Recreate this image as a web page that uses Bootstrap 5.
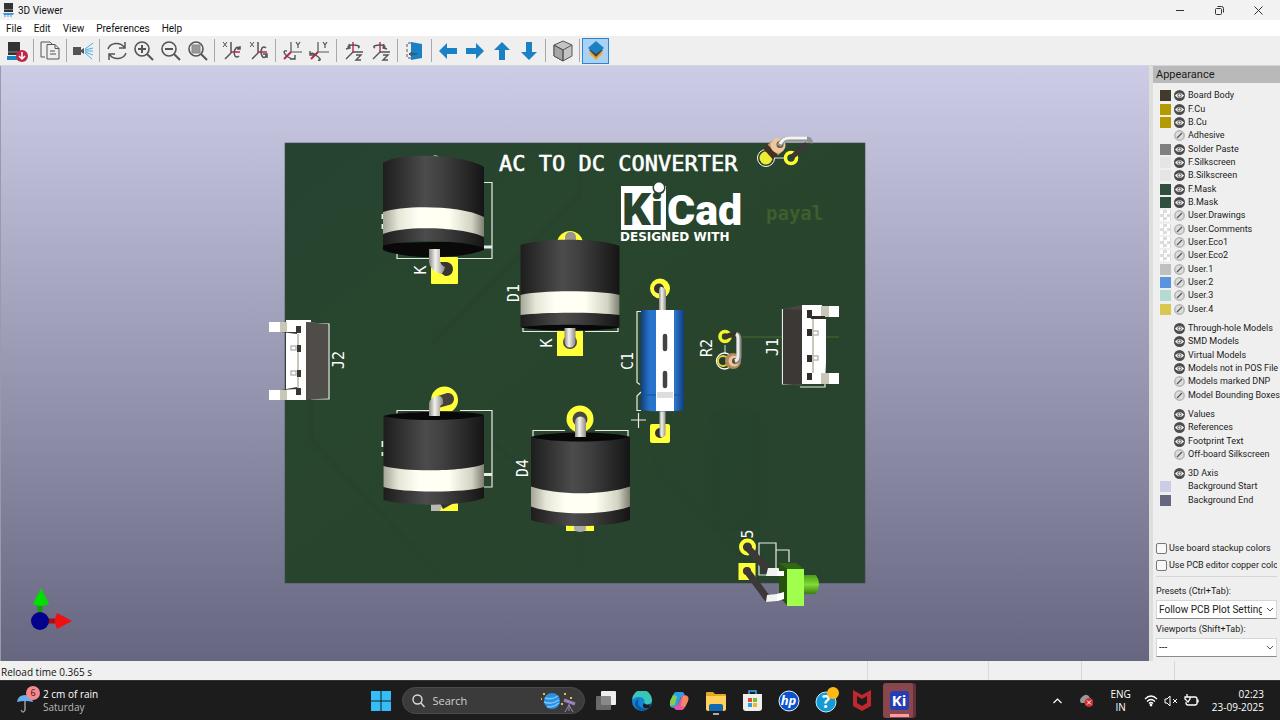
<!DOCTYPE html>
<html lang="en">
<head>
<meta charset="utf-8">
<meta name="viewport" content="width=device-width, initial-scale=1">
<title>3D Viewer</title>
<link rel="stylesheet" href="https://cdn.jsdelivr.net/npm/bootstrap@5.3.0/dist/css/bootstrap.min.css">
<style>
body{font-family:"Open Sans","Noto Sans",sans-serif;font-size:10px;line-height:13px;color:#111;background:#efefef}
button{font:inherit;color:inherit;background:none;border:0;padding:0}
svg{display:block;flex:none}
.titlebar{height:20px;background:#f2f2f2;padding:0 2px 0 3px}
.titlebar,.menus,.side{font-family:Roboto,"Open Sans",sans-serif}
.winctl{width:39px;height:20px;display:grid;place-items:center}
.menus{height:16px;background:#fff;padding-left:6px;gap:12px}
.tools{height:30px;background:#efefef;padding-left:3px;border-bottom:1px solid #d5d5dc}
.tool{width:27px;height:26px;display:grid;place-items:center}
.tool.on{background:#abd2f2;border:1px solid #2b84cf}
.rule{width:1px;height:23px;background:#a9a9a9;margin:0 3px}
.rule.tight{margin-right:2px}
.scene{background:linear-gradient(#cccce6,#666680);border-left:1px solid #9a9aa8;min-height:0}
.side{width:131px;background:#efefef;border-left:4px solid #dedede;color:#1b1b1b}
.side h2{font-size:11px;font-weight:400;line-height:17px;background:#b9b9b9;padding-left:3px;margin:0 0 6px}
.layers{display:grid;grid-auto-rows:1fr;margin:0 0 6px;padding:0 0 0 7px;list-style:none;font-size:9px;white-space:nowrap;overflow:hidden}
.layers li{display:flex;align-items:center;min-height:0}
.sw{width:11px;height:11px;margin-right:3px}
.eye{width:11px;height:11px;margin-right:3px}
.check{background:repeating-conic-gradient(#dcdcdc 0 25%,#fff 0 50%) 0 0/7px 7px}
.l17{height:227px}.l6{height:80px}.l4{height:53px}.l3{height:40px}
.opts{padding:0 3px 4px 3px;font-size:9px;white-space:nowrap}
.opts input{appearance:none;width:11px;height:11px;border:1px solid #777;border-radius:2px;margin:0 2px 0 0;background:#f8f8f8;flex:none}
.opt{height:17px;display:flex;align-items:center;overflow:hidden}
.opts hr{margin:2px 0 8px;border-color:#888}
.pick{position:relative;margin-top:2px}
.pick select{appearance:none;width:100%;height:19px;border:1px solid #d0d8d8;border-bottom-color:#8b8b8b;background:#fff;font-size:10px;padding:0 14px 0 2px;color:#222;display:block;overflow:hidden}
.pick svg{position:absolute;right:3px;top:7px;pointer-events:none}
.status{height:19px;background:#f0f0f0;padding-left:1px}
.status span{border-left:1px solid #d9d9d9;height:100%}
.w121{width:121px}.w93{width:93px}.w106{width:106px}
.taskbar{height:40px;background:#1c1c1c;color:#fff;border-top:1px solid #333}
.wing{flex:1 1 0;min-width:0}
.startbtn{width:37px;height:36px;display:grid;place-items:center}
.find{width:183px;height:27px;border-radius:14px;background:#3b3b3b;border:1px solid #4a4a4a;padding:0 3px 0 9px;margin:0 3px 0 2px}
.find input{background:none;border:0;outline:0;color:#ddd;font-size:11px;width:60px;flex:1;padding:0 0 0 8px}
.find input::placeholder{color:#d0d0d0;opacity:1}
.apps{display:grid;grid-template-columns:repeat(9,1fr);width:330px;height:39px}
.apps button{display:grid;place-items:center}
.tray{gap:13px}
.tray-set{gap:6px}
.silk{font-family:"DejaVu Sans Mono",monospace;fill:#fff}
</style>
</head>
<body class="vh-100 d-flex flex-column overflow-hidden">

<header>
 <div class="titlebar d-flex align-items-center">
  <svg width="11" height="14" viewBox="0 0 11 14"><path d="M1 0h9v9H1z" fill="#333"/><path d="M1 6h9v1H1z" fill="#777"/><path d="M0 10h11l-1 2H1z" fill="#3d9bd4"/><path d="M2 12v2M5 12v2M8 12v2" stroke="#3d9bd4"/></svg>
  <span class="ms-1">3D Viewer</span>
  <div class="ms-auto d-flex">
   <button class="winctl" aria-label="Minimize"><svg width="9" height="9"><path d="M0 4.500h8" stroke="#333"/></svg></button>
   <button class="winctl" aria-label="Restore"><svg width="9" height="9" fill="none" stroke="#333"><rect x=".5" y="2.500" width="6" height="6" rx="1"/><path d="M2.500 .5h4q2 0 2 2v4"/></svg></button>
   <button class="winctl" aria-label="Close"><svg width="9" height="9"><path d="M.5.5l8 8M8.500.5l-8 8" stroke="#333"/></svg></button>
  </div>
 </div>
 <nav class="menus d-flex align-items-center" aria-label="Menu">
  <button>File</button><button>Edit</button><button>View</button><button>Preferences</button><button>Help</button>
 </nav>
 <div class="tools d-flex align-items-center" role="toolbar" aria-label="View tools">
  <button class="tool" aria-label="Reload board"><svg width="22" height="22" viewBox="0 0 22 22"><path d="M2 2h12v13H2z" fill="#333"/><path d="M2 12h12" stroke="#888"/><path d="M1 16h13v4H1z" fill="#1a81c4"/><circle cx="16" cy="16" r="6" fill="#bf2641"/><path d="M16 12v6M13 16l3 3 3-3" stroke="#fff" stroke-width="1.500" fill="none"/></svg></button>
  <i class="rule tight"></i>
  <button class="tool" aria-label="Copy"><svg width="22" height="22" viewBox="0 0 22 22" fill="#efefef" stroke="#545454"><path d="M6 17H2V2h9l3 3"/><path d="M8 4.500h8l4 4V19H8z"/><path d="M16 4.500v4h4M11 11h5M11 14h6" fill="none"/></svg></button>
  <i class="rule tight"></i>
  <button class="tool" aria-label="Raytracing"><svg width="22" height="22" viewBox="0 0 22 22"><path d="M1 7h8v8H1zM9 10l3-2v6l-3-2z" fill="#545454"/><path d="M13 9l8-6M13 10l8-2M13 11h8M13 12l8 3M13 13l7 6" stroke="#4aaee6" fill="none"/></svg></button>
  <i class="rule"></i>
  <button class="tool" aria-label="Redraw"><svg width="22" height="22" viewBox="0 0 22 22" fill="none" stroke="#545454" stroke-width="1.500"><path d="M2 9a9 8 0 0 1 16-2M20 13a9 8 0 0 1-16 2M19 2v6h-6M3 20v-6h6"/></svg></button>
  <button class="tool" aria-label="Zoom in"><svg width="22" height="22" viewBox="0 0 22 22" fill="none" stroke="#545454" stroke-width="1.600"><circle cx="9" cy="9" r="7"/><path d="M14 14l6 6" stroke-width="2"/><path d="M5 9h8M9 5v8" stroke-width="2"/></svg></button>
  <button class="tool" aria-label="Zoom out"><svg width="22" height="22" viewBox="0 0 22 22" fill="none" stroke="#545454" stroke-width="1.600"><circle cx="9" cy="9" r="7"/><path d="M14 14l6 6" stroke-width="2"/><path d="M5 9h8" stroke-width="2"/></svg></button>
  <button class="tool" aria-label="Zoom to fit"><svg width="22" height="22" viewBox="0 0 22 22" fill="none" stroke="#545454" stroke-width="1.600"><circle cx="9" cy="9" r="7"/><path d="M14 14l6 6" stroke-width="2"/><path d="M5 5h8v8H5z" fill="#999" stroke="#888" stroke-width="1"/></svg></button>
  <i class="rule"></i>
  <button class="tool" aria-label="Rotate X clockwise"><svg width="22" height="22" viewBox="0 0 22 22" fill="none" stroke="#545454" stroke-width="1.500"><path d="M2 2l4 5M6 2L2 7" stroke-width="1"/><path d="M10 2v11l-6 6"/><path d="M10 12h9" stroke="#bf2641"/><path d="M19 9q-2-3-4-1-3 4-1 8 2 2 4 0M16 9h3V6"/></svg></button>
  <button class="tool" aria-label="Rotate X counterclockwise"><svg width="22" height="22" viewBox="0 0 22 22" fill="none" stroke="#545454" stroke-width="1.500"><path d="M2 2l4 5M6 2L2 7" stroke-width="1"/><path d="M10 2v11l-6 6"/><path d="M10 12h9" stroke="#bf2641"/><path d="M18 8q-2-2-4 0-2 4 0 8 2 3 4 0v-2M15 14h4v4"/></svg></button>
  <i class="rule"></i>
  <button class="tool" aria-label="Rotate Y clockwise"><svg width="22" height="22" viewBox="0 0 22 22" fill="none" stroke="#545454" stroke-width="1.400"><path d="M9 2v10h11M14 2l2 3 2-3M16 5v3" stroke-width="1.200"/><path d="M9 12l-7 7" stroke="#bf2641" stroke-width="2"/><path d="M5 11c-5-1-3 3 1 6 3 2 6 3 6 1M8 19h5v-4"/></svg></button>
  <button class="tool" aria-label="Rotate Y counterclockwise"><svg width="22" height="22" viewBox="0 0 22 22" fill="none" stroke="#545454" stroke-width="1.400"><path d="M9 2v10h11M14 2l2 3 2-3M16 5v3" stroke-width="1.200"/><path d="M9 12l-7 7" stroke="#bf2641" stroke-width="2"/><path d="M2 15c-1-3 3-2 6 1 3 2 5 5 1 4M1 11v4h4"/></svg></button>
  <i class="rule"></i>
  <button class="tool" aria-label="Rotate Z clockwise"><svg width="22" height="22" viewBox="0 0 22 22" fill="none" stroke="#545454" stroke-width="1.400"><path d="M10 12h10M10 12l-7 7M13 15h5l-5 5h5"/><path d="M10 2v10" stroke="#bf2641"/><path d="M15 8c4-2-2-3-5-3s-8 2-3 3M6 4l1 4-4 1"/></svg></button>
  <button class="tool" aria-label="Rotate Z counterclockwise"><svg width="22" height="22" viewBox="0 0 22 22" fill="none" stroke="#545454" stroke-width="1.400"><path d="M10 12h10M10 12l-7 7M13 15h5l-5 5h5"/><path d="M10 2v10" stroke="#bf2641"/><path d="M5 8c-4-2 2-3 5-3s8 2 3 3M14 4l-1 4 4 1"/></svg></button>
  <i class="rule"></i>
  <button class="tool" aria-label="Flip board"><svg width="22" height="22" viewBox="0 0 22 22"><path d="M7 2l11 2v14L7 20z" fill="#1a81c4"/><path d="M7 3H3v15h4" stroke="#545454" stroke-dasharray="3 2" fill="none"/><path d="M5 14h8M8 12l-3 2 3 2" stroke="#345" fill="none"/></svg></button>
  <i class="rule tight"></i>
  <button class="tool" aria-label="Move left"><svg width="20" height="20" viewBox="0 0 20 20"><path id="arr" d="M1 10l8-8v5h10v6H9v5z" fill="#1a81c4"/></svg></button>
  <button class="tool" aria-label="Move right"><svg width="20" height="20" viewBox="0 0 20 20"><use href="#arr" transform="rotate(180 10 10)"/></svg></button>
  <button class="tool" aria-label="Move up"><svg width="20" height="20" viewBox="0 0 20 20"><use href="#arr" transform="rotate(90 10 10)"/></svg></button>
  <button class="tool" aria-label="Move down"><svg width="20" height="20" viewBox="0 0 20 20"><use href="#arr" transform="rotate(270 10 10)"/></svg></button>
  <i class="rule"></i>
  <button class="tool" aria-label="Orthographic projection"><svg width="22" height="22" viewBox="0 0 22 22" stroke="#545454" stroke-linejoin="round"><path d="M11 1l9 4v11l-9 5-9-5V5z" fill="#c4c4c4"/><path d="M11 10v11l-9-5V5z" fill="#a5a5a5"/><path d="M2 5l9 5 9-5M11 10v11" fill="none"/></svg></button>
  <i class="rule tight"></i>
  <button class="tool on" aria-label="Appearance manager" aria-pressed="true"><svg width="20" height="20" viewBox="0 0 20 20"><path d="M3 12l7 7 7-7-7-4z" fill="#f0a52c"/><path d="M3 9l7 7 7-7-7-4z" fill="#444"/><path d="M2 7l8-7 8 7-8 6z" fill="#1a81c4"/></svg></button>
 </div>
</header>

<main class="d-flex flex-grow-1" style="min-height:0">
<section class="scene flex-grow-1" aria-label="3D board">
<svg width="100%" height="100%" viewBox="1 66 1148 595">
 <defs>
  <linearGradient id="blk"><stop offset="0" stop-color="#1d1d1d"/><stop offset=".42" stop-color="#4c4c4c"/><stop offset=".6" stop-color="#3f3f3f"/><stop offset="1" stop-color="#151515"/></linearGradient>
  <linearGradient id="wht"><stop offset="0" stop-color="#a5a597"/><stop offset=".15" stop-color="#e6e6d7"/><stop offset=".35" stop-color="#fffff6"/><stop offset=".65" stop-color="#fffff2"/><stop offset=".88" stop-color="#d3d3c4"/><stop offset="1" stop-color="#7d7d70"/></linearGradient>
  <linearGradient id="pin"><stop offset="0" stop-color="#8e8b85"/><stop offset=".4" stop-color="#f3f1ed"/><stop offset="1" stop-color="#8b8882"/></linearGradient>
  <linearGradient id="blu"><stop offset="0" stop-color="#123f7e"/><stop offset=".2" stop-color="#2874cc"/><stop offset=".8" stop-color="#2a73c9"/><stop offset="1" stop-color="#113c7b"/></linearGradient>
  <linearGradient id="pcb" x2="1" y2="1"><stop offset="0" stop-color="#264332"/><stop offset=".3" stop-color="#28452d"/><stop offset="1" stop-color="#28432e"/></linearGradient>
  <linearGradient id="grn" x2="0" y2="1"><stop offset="0" stop-color="#4d9a16"/><stop offset=".5" stop-color="#80dc36"/><stop offset="1" stop-color="#3d7d12"/></linearGradient>
 </defs>
 <rect x="285" y="143" width="580" height="440" fill="url(#pcb)" stroke="#3a4a4a" stroke-width=".6"/>
 <g fill="none" stroke="#233f34" stroke-width="5" opacity=".22"><path d="M311 320v120L440 575M656 450v20l100 100M430 345l150-150v-50M712 410v105M760 410v160M580 535v34M490 440l60 50"/></g>
 <path d="M712 410h48v120h-48z" fill="#25422f" opacity=".6"/>
 <path d="M742 337h97" stroke="#3e5e2b" stroke-width="1.500"/>

 <text class="silk" x="499" y="171" font-size="22" stroke="#fff" stroke-width=".6">AC TO DC CONVERTER</text>
 <text class="silk" x="766" y="220" font-size="19" font-weight="700" style="fill:#3e5e2b">payal</text>
 <rect x="621" y="186" width="45" height="44" fill="#fff"/>
 <text x="622" y="225" font-family="Roboto,sans-serif" font-weight="900" font-size="45" fill="#28442e">Ki</text>
 <circle cx="659" cy="188" r="6.500" fill="#28442e"/>
 <circle cx="659" cy="187.500" r="5" fill="#fff"/>
 <text x="667" y="225" font-family="Roboto,sans-serif" font-weight="900" font-size="43" fill="#fff">Cad</text>
 <text x="620" y="241" font-family="DejaVu Sans,sans-serif" font-weight="700" font-size="12" fill="#fff">DESIGNED WITH</text>

 <g class="silk" font-size="15" text-anchor="middle">
  <text transform="translate(344 360) rotate(-90)">J2</text><text transform="translate(519 293) rotate(-90)">D1</text>
  <text transform="translate(426 270) rotate(-90)">K</text><text transform="translate(552 343) rotate(-90)">K</text>
  <text transform="translate(633 361) rotate(-90)">C1</text><text transform="translate(712 348) rotate(-90)">R2</text>
  <text transform="translate(778 347) rotate(-90)">J1</text><text transform="translate(528 468) rotate(-90)">D4</text>
  <text transform="translate(753 534) rotate(-90)">5</text>
 </g>
 <g fill="none" stroke="#e8ece8" stroke-width="1.200">
  <path d="M484 182.500h8v76H397V252M484 410.500h8v76.500h-8M397 414v-3.500h32M460 410.500h32M523 328v3.500h34M585 331.500h33V328M533 437v-6.500h32M595 430.500h33V437"/>
  <path d="M484 247h8M484 474.500h8" stroke-width="3"/>
  <path d="M641 311.500h-4v71l3 2M641 392l-4 4v14.500h4M631 420h15M638.500 413v15" />
  <path d="M382.500 214v5M382.500 224v5M382.500 441v6M382.500 452v4" stroke-width="2"/>
  <path d="M759 543h17v32h-17zM776 550h13v12M306 323l23 1v75h-18"/>
  <path d="M785 309.500h15M782.500 309v75M782 384h18M800 387h25v-7"/>
 </g>

 <!-- diode upper left -->
 <rect x="431" y="257" width="27" height="27" rx="1" fill="#ffff3a"/>
 <path d="M431 158q4-6 9 0z" fill="#aaa"/>
 <path d="M383 243v7c20 9 75 10 101 0v-9z" fill="#090909"/>
 <path d="M383 163c16-11 80-9 101 4v81c-20-8-80-10-101-2z" fill="url(#blk)"/>
 <path d="M383 212c20-7 78-7 101 5v20c-20-10-80-12-101-3z" fill="url(#wht)"/>
 <path d="M438 262l9 0a6.500 6.500 0 1 1-2 14l-8-6z" fill="#39362f"/>
 <path d="M429 249h11v11q0 5 5 7-1 5-4 7-12-4-12-13z" fill="url(#pin)"/>

 <!-- diode centre -->
 <circle cx="570" cy="244" r="13" fill="#ffff3a"/><rect x="565" y="232" width="11" height="12" rx="5" fill="#99958e"/>
 <rect x="557" y="329" width="26" height="27" fill="#ffff3a"/>
 <path d="M520.500 245c20-7 79-7 99 1v81c-18 5-80 5-99 0z" fill="url(#blk)"/>
 <path d="M520.500 327c25-3 74-3 99 0-20 5-79 5-99 0z" fill="#080808"/>
 <path d="M520.500 295c20-5 79-5 99 0v20c-24-3-75-3-99 0z" fill="url(#wht)"/>
 <circle cx="570" cy="342" r="7" fill="#444"/><path d="M564.500 328h11v14a5.500 5.500 0 0 1-11 0z" fill="url(#pin)"/>

 <!-- diode lower left -->
 <circle cx="444.500" cy="400" r="13.500" fill="#ffff3a"/><path d="M431 500h27v11h-27z" fill="#ffff3a"/>
 <path d="M431 503h12l-3 8h-9z" fill="#bbb8b2"/><path d="M440 503h14q-4 2-11 6z" fill="#333"/>
 <path d="M383.500 416c20-6 82-7 100.500-1v83c-18 8-78 9-100.500 2z" fill="url(#blk)"/>
 <path d="M383.500 416c20-5 82-6 100.500-1-18 6-80 7-100.500 1z" fill="#080808"/>
 <path d="M383.500 466c20 6 82 6 100.500-2v23c-18 6-82 6-100.500 0z" fill="url(#wht)"/>
 <path d="M438 396l9-3a6 6 0 0 1 2 12l-11 3z" fill="#45423c"/>
 <path d="M429 416v-12q1-8 11-8 4 2 3 8-3 1-3 4v8z" fill="url(#pin)"/>

 <!-- diode lower centre -->
 <circle cx="580" cy="419" r="13.500" fill="#ffff3a"/><path d="M566 522h28v9h-28z" fill="#ffff3a"/>
 <path d="M574 524h12v6q-6 4-12 0z" fill="#aaa"/>
 <path d="M531 437c20-6 79-6 99 0v83c-25 8-74 8-99 0z" fill="url(#blk)"/>
 <path d="M531 437c20-6 79-6 99 0-20 6-79 6-99 0z" fill="#080808"/>
 <path d="M531 486.500c25 9 74 9 99 0v20c-25 9-74 9-99 0z" fill="url(#wht)"/>
 <circle cx="580" cy="419" r="7.500" fill="#4a4640"/><path d="M575 437v-15a5 5 0 0 1 11 0v15z" fill="url(#pin)"/>

 <!-- electrolytic capacitor -->
 <circle cx="660" cy="288.500" r="10" fill="#ffff3a"/><circle cx="659" cy="288.500" r="5" fill="#333"/>
 <rect x="650" y="424" width="20" height="19" rx="2" fill="#ffff3a"/><circle cx="660" cy="433" r="5" fill="#333"/>
 <path d="M659 311v-20q0-5 3-4 4 1 4 5v19zM659.500 411h6v24q-5 5-6-1z" fill="url(#pin)"/>
 <path d="M641 310h43v81q-2 4 0 7v12q-22 3-43 0v-12q2-3 0-7z" fill="url(#blu)"/>
 <path d="M656 310h18v101h-18z" fill="#fff"/><path d="M657 392h16v6h-16z" fill="#ddd"/>
 <path d="M665 336v13M665 373v13" stroke="#444" stroke-width="4.500" stroke-linecap="round"/>
 <path d="M641 395h15M674 395h10" stroke="#184f98"/>

 <!-- resistors -->
 <circle cx="725" cy="336.500" r="5" fill="none" stroke="#f4f42c" stroke-width="3.600"/><path d="M725 337q9-4 13-1" stroke="#38332d" stroke-width="5" fill="none"/>
 <path d="M725 345v9" stroke="#ddd"/><circle cx="724.500" cy="361" r="8" fill="#2c3a2c" stroke="#fff" stroke-width="1.300"/><circle cx="723" cy="361" r="5" fill="none" stroke="#dada30" stroke-width="2"/>
 <circle cx="733" cy="361" r="8" fill="#b18a5f"/><circle cx="734" cy="361" r="5.500" fill="#e9c79b"/><circle cx="735" cy="361" r="3" fill="#554b3e"/>
 <path d="M735 362q4-1 4-5v-18q0-4-3-5" stroke="#8b8985" stroke-width="5" fill="none"/><path d="M735 361q3-1 3-5v-18q0-3-2-4" stroke="#eeece8" stroke-width="3" fill="none"/>
 <circle cx="766" cy="158" r="8.500" fill="#2c3a2c" stroke="#fff"/><circle cx="766" cy="158" r="6.500" fill="#ecec30"/>
 <path d="M775 158h10" stroke="#ddd"/><circle cx="791" cy="158" r="5.500" fill="none" stroke="#ffff30" stroke-width="3.600"/>
 <path d="M792 157l15-13" stroke="#3b3836" stroke-width="5"/>
 <path d="M768 154l10-9" stroke="#433124" stroke-width="14"/><path d="M773 150l4-4" stroke="#c49a70" stroke-width="15"/><circle cx="778" cy="145.500" r="7.500" fill="#edc79c"/><circle cx="780" cy="144.500" r="3.500" fill="#63523f"/>
 <path d="M779 146q3-7 9-7h18q5 0 4 4" stroke="#929090" stroke-width="5" fill="none" stroke-linejoin="round"/><path d="M780 144q3-6 9-6h18" stroke="#f5f5f5" stroke-width="3" fill="none"/>

 <!-- connectors -->
 <path d="M306 322l22 2v74l-22 2z" fill="#504d49"/><path d="M286 320h25v2h-5v78h-20z" fill="#fff"/>
 <path d="M269 322h17v10h-17zM269 390h17v10h-17z" fill="#fff"/><path d="M280 322h7v10h-7zM280 390h7v10h-7zM297 334h2v54h-2z" fill="#c9c8b8"/>
 <path d="M296 326h5v7h-5zM297 345h4v7h-4zM297 370h4v7h-4zM296 388h5v7h-5zM281 332h16v2zM281 390l16-3v2z" fill="#3a3733"/>
 <path d="M291 346h5v4h-5zM291 371h5v4h-5z" fill="#fff" stroke="#bbb" stroke-width="1.500"/>
 <path d="M783 309h19v75h-19z" fill="#3c3835"/><path d="M783 309l19-4v5zM783 384h19v2z" fill="#4a4643"/><path d="M802 305h20v14h4v43l-1 22h-23z" fill="#fff"/>
 <path d="M822 306h17v11h-17zM822 373h17v11h-17z" fill="#fff"/><path d="M821 306h8v11h-8zM821 373h8v11h-8zM812 319h2v54h-2z" fill="#c9c8b8"/>
 <path d="M807 310h5v8h-5zM807 329h5v7h-5zM807 355h5v7h-5zM807 373h5v7h-5zM811 316h14v3h-14z" fill="#302d2a"/>
 <path d="M813 331h5v4h-5zM813 356h5v4h-5z" fill="#fff" stroke="#bbb" stroke-width="1.500"/>

 <!-- green LED -->
 <circle cx="747.500" cy="547" r="6.500" fill="none" stroke="#ffff38" stroke-width="4"/><rect x="738.500" y="563" width="17" height="17" fill="#ffff38"/><circle cx="747" cy="571" r="4" fill="#333"/>
 <path d="M747 547l20 22M747 571l20 27" stroke="#3c3739" stroke-width="7" stroke-linecap="round"/>
 <path d="M768 568h10l6 2v6h-18zM767 595l10-1 7-2v7l-7 2-11 1z" fill="#f2f2f2"/>
 <path d="M779 563l8 6v36l-8-8z" fill="#27510c"/><path d="M779 563h17l8 6h-17z" fill="#326813"/>
 <path d="M804 575h12q6 9 0 19h-12z" fill="url(#grn)"/><path d="M787 569h17v37h-17z" fill="#a0ff4d"/>
 <path d="M777 571h7v5h-7zM777 594l7-2v7l-7 2z" fill="#fff"/>

 <!-- axis marker -->
 <path d="M40 620v-20" stroke="#12a012" stroke-width="5"/><path d="M41 588l8 16q-8 4-16 0z" fill="#00e000"/>
 <path d="M45 621h13" stroke="#a80e12" stroke-width="5"/><path d="M72 621l-15-8q-4 8 0 16z" fill="#f01010"/><circle cx="40" cy="621" r="9" fill="#00008c"/>
</svg>
</section>

<aside class="side d-flex flex-column flex-shrink-0">
 <h2>Appearance</h2>
 <ul class="layers l17" id="layers"></ul>
 <ul class="layers l6" id="models"></ul>
 <ul class="layers l4" id="texts"></ul>
 <ul class="layers l3" id="misc"></ul>
 <div class="opts mt-auto">
  <label class="opt"><input type="checkbox">Use board stackup colors</label>
  <label class="opt"><input type="checkbox">Use PCB editor copper colors</label>
  <hr>
  <label for="preset">Presets (Ctrl+Tab):</label>
  <div class="pick"><select id="preset"><option>Follow PCB Plot Settings</option></select><svg width="8" height="6"><path d="M1 1l3 3 3-3" stroke="#555" fill="none"/></svg></div>
  <label for="vports" class="pt-1">Viewports (Shift+Tab):</label>
  <div class="pick"><select id="vports"><option>---</option></select><svg width="8" height="6"><path d="M1 1l3 3 3-3" stroke="#555" fill="none"/></svg></div>
 </div>
</aside>
</main>

<div class="status d-flex align-items-center"><div class="me-auto pt-1">Reload time 0.365 s</div><span class="w121"></span><span class="w93"></span><span class="w93"></span><span class="w106"></span></div>

<footer class="taskbar d-flex align-items-center">
 <div class="wing d-flex align-items-center ps-3">
  <button class="d-flex align-items-center text-start">
   <svg width="25" height="34" viewBox="0 0 25 34"><path d="M1 18q1-7 8-7t8 7q-8-2-16 0z" fill="#66aef0"/><path d="M9 17v9q-2 4-4 0" stroke="#999" fill="none" stroke-width="1.500"/><circle cx="17" cy="9" r="7" fill="#f48a8d"/><text x="17" y="12" font-size="9" text-anchor="middle" fill="#401015">6</text></svg>
   <span style="padding-left:2px">2 cm of rain<br><span style="color:#b9b9b9">Saturday</span></span>
  </button>
 </div>
 <button class="startbtn" aria-label="Start"><svg width="20" height="20"><path d="M0 0h9.500v9.500H0zM10.500 0H20v9.500h-9.500zM0 10.500h9.500V20H0zM10.500 10.500H20V20h-9.500z" fill="#35bdf8"/></svg></button>
 <label class="find d-flex align-items-center">
  <svg width="13" height="14" viewBox="0 0 13 14" fill="none" stroke="#ddd" stroke-width="1.400"><circle cx="5.500" cy="5.500" r="4.500"/><path d="M9 9l3.500 4"/></svg>
  <input type="search" placeholder="Search" aria-label="Search">
  <svg width="42" height="24" viewBox="0 0 42 24"><circle cx="13" cy="12" r="8" fill="#2c90df"/><path d="M6 9q7 2 13-2M5 13q8 3 15-2M8 18q7 0 12-4" stroke="#75c5fa" stroke-width="1.500" fill="none"/><path d="M4 4h2v2H4zM25 4h2v2h-2zM2 9h1v2H2zM31 8h2v2h-2zM22 14h2v2h-2z" fill="#f4bc35"/><path d="M25 11l11 4" stroke="#9a83b9" stroke-width="3"/><path d="M30 16l-4 7M30 16l4 7M30 15v7" stroke="#9a83b9" stroke-width="1"/></svg>
 </label>
 <nav class="apps" aria-label="Apps">
  <button aria-label="Task view"><svg width="20" height="20"><rect x="5" width="15" height="14" rx="1" fill="#eee"/><rect y="5" width="15" height="14" rx="1" fill="#777" opacity=".85"/></svg></button>
  <button aria-label="Edge"><svg width="20" height="20" viewBox="0 0 20 20"><circle cx="10" cy="10" r="10" fill="#1584d4"/><path d="M0 9a10 10 0 0 1 20 0c0 5-7 5-8 3 2-4-2-6-5-6-4 0-6 2-7 3z" fill="#38c7b7"/><path d="M7 8c-3 6 2 11 9 9q-4 4-9 2C1 15 2 9 7 8z" fill="#0c59a4"/><path d="M12 12q2 3 7 1l-2 4q-9 1-5-5z" fill="#1c1c1c"/></svg></button>
  <button aria-label="Copilot"><svg width="20" height="20" viewBox="0 0 20 20"><path d="M7 1h6q2 0 3 4l-4 1-3 8q-1 3-4 3-5 0-4-5l3-8q1-3 3-3z" fill="#22a4e4"/><path d="M1 10l3-6 4 1-2 9-5 1z" fill="#8acb4b"/><path d="M13 19H8q-3 0-3-4l4-1 3-8q1-2 4-2 5 1 3 6l-3 6q-1 3-3 3z" fill="#e657a3"/><path d="M14 5q6-1 5 5l-3 6-4-1z" fill="#f28b5c"/></svg></button>
  <button aria-label="File Explorer"><svg width="20" height="28" viewBox="0 0 20 28"><path d="M0 6q0-1 1-1h6l2 2h10q1 0 1 1v14H0z" fill="#e5a526"/><path d="M0 9h20v13q0 2-2 2H2q-2 0-2-2z" fill="#ffd15c"/><path d="M3 24v-5q0-2 2-2h10q2 0 2 2v5z" fill="#1269b3"/><path d="M7 27h6" stroke="#aaa" stroke-width="2"/></svg></button>
  <button aria-label="Microsoft Store"><svg width="19" height="21" viewBox="0 0 19 21"><path d="M6 5V1h7v4" stroke="#38aee2" fill="none" stroke-width="1.500"/><path d="M0 4h19v14q0 3-3 3H3q-3 0-3-3z" fill="#eee"/><path d="M5 8h4v4H5z" fill="#e64b2d"/><path d="M10 8h4v4h-4z" fill="#7eb833"/><path d="M5 13h4v4H5z" fill="#2a9fe0"/><path d="M10 13h4v4h-4z" fill="#f5b521"/></svg></button>
  <button aria-label="HP"><svg width="22" height="22" viewBox="0 0 22 22"><circle cx="11" cy="11" r="10" fill="#0a53cf" stroke="#e7eefb"/><text x="10.500" y="15" text-anchor="middle" font-size="13" font-style="italic" font-weight="700" fill="#fff">hp</text></svg></button>
  <button aria-label="Get Help"><svg width="26" height="28" viewBox="0 0 26 28"><circle cx="13" cy="15" r="10" fill="#139bd8" stroke="#c8e9f7"/><text x="13" y="21" text-anchor="middle" font-size="17" font-weight="700" fill="#fff">?</text><circle cx="20" cy="6" r="6" fill="#fdb813"/></svg></button>
  <button aria-label="McAfee"><svg width="18" height="21" viewBox="0 0 18 21"><path d="M0 0l9 5 9-5v16l-9 5-9-5zM4 6v7l5 3 5-3V6L9 9z" fill="#c1282d" fill-rule="evenodd"/></svg></button>
  <button aria-label="KiCad"><svg width="33" height="35" viewBox="0 0 33 35"><rect x="3" width="30" height="35" rx="3" fill="#673038"/><rect width="30" height="35" rx="3" fill="#88464d"/><rect x="7" y="8" width="19" height="19" rx="3" fill="#273db5"/><text x="16" y="23" text-anchor="middle" font-size="15" font-weight="700" fill="#fff">Ki</text><path d="M7 32.500h19" stroke="#ff99a3" stroke-width="3"/></svg></button>
 </nav>
 <div class="wing tray d-flex align-items-center justify-content-end pe-3">
  <button class="pe-1" aria-label="Hidden icons"><svg width="9" height="6"><path d="M.5 5l4-4 4 4" stroke="#fff" fill="none" stroke-width="1.200"/></svg></button>
  <button class="pe-1" aria-label="OneDrive"><svg width="14" height="13" viewBox="0 0 14 13"><path d="M2 9a4 4 0 0 1 1-6q5-5 8 1 3 1 2 5z" fill="#999"/><circle cx="10" cy="8.500" r="4.500" fill="#d32d35"/><path d="M8 6.500l4 4M12 6.500l-4 4" stroke="#fff"/></svg></button>
  <button class="text-center">ENG<br>IN</button>
  <button class="tray-set d-flex align-items-center" aria-label="Network, volume, battery">
   <svg width="14" height="13" viewBox="0 0 14 13" fill="none" stroke="#fff" stroke-width="1.200"><path d="M1 5q6-6 12 0M3 7.500q4-4 8 0M5 9.500q2-2 4 0"/><circle cx="7" cy="11" r=".8"/></svg>
   <svg width="14" height="12" viewBox="0 0 14 12" fill="none" stroke="#fff"><path d="M1 4h2l3-3v10L3 8H1zM9 4l4 4M13 4L9 8"/></svg>
   <svg width="15" height="13" viewBox="0 0 15 13" fill="none" stroke="#fff" stroke-width="1.300"><path d="M6 3h5q2 0 2 2v4q0 2-2 2H4q-2 0-2-2V8M14 5.500v3M3 0v3M1 3h5v2L4 8 1 5z"/></svg>
  </button>
  <button class="text-end">02:23<br>23-09-2025</button>
 </div>
</footer>

<script src="https://cdn.jsdelivr.net/npm/bootstrap@5.3.0/dist/js/bootstrap.bundle.min.js"></script>
<script>
// Each row: label, visibility (1 shown, 0 hidden, null no toggle), swatch colour
const groups = {
 layers: [['Board Body',1,'#423b2b'],['F.Cu',1,'#b39a00'],['B.Cu',1,'#b39a00'],['Adhesive',0],['Solder Paste',1,'#808080'],['F.Silkscreen',1,'#e5e5e5'],['B.Silkscreen',1,'#e5e5e5'],['F.Mask',1,'#30503f'],['B.Mask',1,'#30503f'],['User.Drawings',0,'check'],['User.Comments',0,'check'],['User.Eco1',0,'check'],['User.Eco2',0,'check'],['User.1',0,'#c0c0c0'],['User.2',0,'#5994dc'],['User.3',0,'#b4dbd2'],['User.4',0,'#d8c852']],
 models: [['Through-hole Models',1],['SMD Models',1],['Virtual Models',1],['Models not in POS File',1],['Models marked DNP',0],['Model Bounding Boxes',0]],
 texts: [['Values',1],['References',1],['Footprint Text',1],['Off-board Silkscreen',0]],
 misc: [['3D Axis',1],['Background Start',null,'#cccce6'],['Background End',null,'#666680']]
};
const shown = '<svg width="11" height="11" viewBox="0 0 11 11"><circle cx="5.500" cy="5.500" r="5.500" fill="#4c4c4c"/><path d="M1 5.500q4.500-5 9 0-4.500 5-9 0z" fill="#fff"/><circle cx="5.500" cy="5.500" r="1.700" fill="#eee" stroke="#4c4c4c"/></svg>';
const hidden = '<svg width="11" height="11" viewBox="0 0 11 11"><circle cx="5.500" cy="5.500" r="4.700" fill="#ddd" stroke="#b5b5b5" stroke-width="1.500"/><path d="M3 8l5-5" stroke="#555" stroke-width="1.300"/></svg>';
for (const [id, rows] of Object.entries(groups))
 document.getElementById(id).innerHTML = rows.map(([name, vis, col]) => {
  const sw = col === 'check' ? '<span class="sw check"></span>' : `<span class="sw" style="background:${col || 'none'}"></span>`;
  const eye = vis === null || vis === undefined ? '<span class="eye"></span>' : `<button class="eye" aria-label="Toggle ${name}">${vis ? shown : hidden}</button>`;
  return `<li>${sw}${eye}<span>${name}</span></li>`;
 }).join('');
</script>
</body>
</html>
